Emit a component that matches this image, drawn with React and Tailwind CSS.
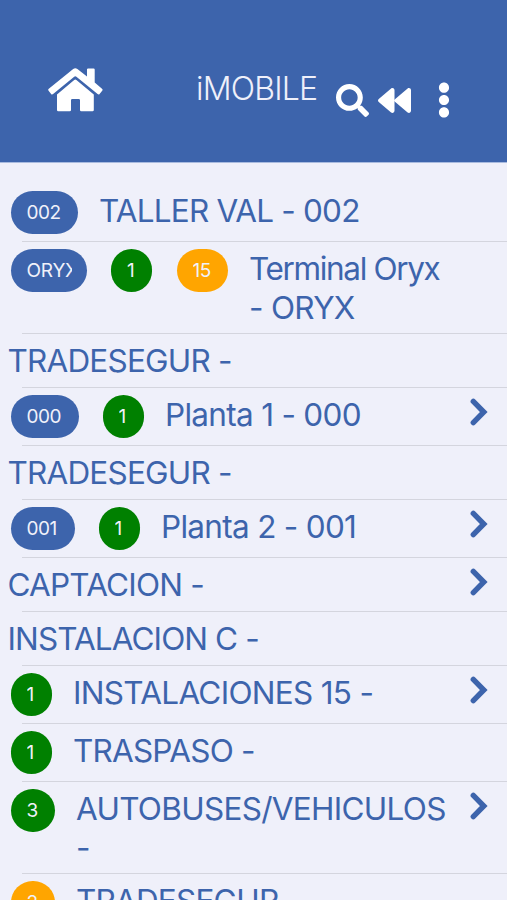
import { FaBackward, FaEllipsisV, FaSearch } from "react-icons/fa";

const BLUE = "bg-[#3d64ac]";
const GREEN = "bg-[#008000]";
const ORANGE = "bg-[#ffa500]";

const rows = [
  {
    badges: [{ text: "002", color: BLUE, size: "w-[67px]" }],
    lines: ["TALLER VAL - 002"],
  },
  {
    badges: [
      { text: "ORYX", color: BLUE, size: "w-[76px]", tracking: "tracking-[-0.2px]" },
      { text: "1", color: GREEN, size: "w-[41px]" },
      { text: "15", color: ORANGE, size: "w-[51px]" },
    ],
    lines: ["Terminal Oryx", "- ORYX"],
    tracking: ["tracking-[-1.35px]", "tracking-[-0.7px]"],
    gap: "gap-[24.5px]",
  },
  { lines: ["TRADESEGUR -"] },
  {
    badges: [
      { text: "000", color: BLUE, size: "w-[68px]" },
      { text: "1", color: GREEN, size: "w-[41px]" },
    ],
    lines: ["Planta 1 - 000"],
    tracking: ["tracking-[-0.7px]"],
    arrow: true,
  },
  { lines: ["TRADESEGUR -"] },
  {
    badges: [
      { text: "001", color: BLUE, size: "w-[64px]" },
      { text: "1", color: GREEN, size: "w-[41px]" },
    ],
    lines: ["Planta 2 - 001"],
    tracking: ["tracking-[-0.7px]"],
    arrow: true,
  },
  { lines: ["CAPTACION -"], arrow: true },
  { lines: ["INSTALACION C -"], tracking: ["tracking-[-0.9px]"] },
  {
    badges: [{ text: "1", color: GREEN, size: "w-[41px]" }],
    lines: ["INSTALACIONES 15 -"],
    tracking: ["tracking-[-0.7px]"],
    arrow: true,
  },
  {
    badges: [{ text: "1", color: GREEN, size: "w-[41px]" }],
    lines: ["TRASPASO -"],
  },
  {
    badges: [{ text: "3", color: GREEN, size: "w-[44px]" }],
    lines: ["AUTOBUSES/VEHICULOS", "-"],
    tracking: ["tracking-[-0.7px]"],
    arrow: true,
  },
  {
    badges: [{ text: "2", color: ORANGE, size: "w-[44px]" }],
    lines: ["TRADESEGUR"],
  },
];

function HomeIcon() {
  return (
    <svg className="ml-12 mt-[65px] h-[49px] w-[55px]" viewBox="0 0 55 49" fill="currentColor">
      {/* roof + chimney */}
      <path d="M25.2 3.9Q27.3 2.4 29.4 3.9L39 11.4V4.6Q39 3.5 40.1 3.5H45.6Q46.7 3.5 46.7 4.6V17.5L54 23.7Q55.1 24.7 54.2 25.8L51.6 28.9Q50.7 29.9 49.6 29L28.4 11.7Q27.3 10.9 26.2 11.7L5.1 29Q4 29.9 3.1 28.9L.6 25.8Q-.3 24.7.8 23.7Z" />
      {/* body with the door cut out */}
      <path d="M26.2 14.9Q27.3 14 28.4 14.9L45.8 29.5V45Q45.8 46.3 44.5 46.3H33.3Q32 46.3 32 45V35.2Q32 34 30.8 34H24.2Q23 34 23 35.2V45Q23 46.3 21.7 46.3H10.3Q9 46.3 9 45V29.5Z" />
    </svg>
  );
}

function Badge({ text, color, size, tracking = "tracking-[-0.5px]" }) {
  return (
    <span
      className={`${color} ${size} ${tracking} h-[43px] shrink-0 rounded-full pl-4 pr-[15px] text-[19px] leading-[43px] text-[#f0f1fa]`}
    >
      <span className="block overflow-hidden">{text}</span>
    </span>
  );
}

function Arrow() {
  return (
    <svg
      className="ml-auto mt-[2.5px] h-7 w-[18px] shrink-0"
      viewBox="0 0 18 28"
      fill="none"
      stroke="#3d64ac"
      strokeWidth="5.4"
      strokeLinecap="round"
      strokeLinejoin="miter"
    >
      <path d="M3.3 3.4 13.8 14 3.3 24.6" />
    </svg>
  );
}

function Row({ badges = [], lines, arrow, tracking = [], gap = "gap-6" }) {
  const hasBadges = badges.length > 0;

  return (
    <li>
      <div
        className={`flex items-start pr-[19px] pt-[7px] ${
          hasBadges ? "min-h-[57px] pl-[10.5px]" : "min-h-[53px] pl-[7.5px]"
        } ${lines.length > 1 ? "pb-[6px]" : ""}`}
      >
        {hasBadges && (
          <div className={`mr-[21.5px] flex ${gap}`}>
            {badges.map((b, i) => (
              <Badge key={i} {...b} />
            ))}
          </div>
        )}
        <div className="whitespace-nowrap pt-px text-[31.5px] leading-[38.5px]">
          {lines.map((line, i) => (
            <div key={line} className={tracking[i] || "tracking-[-0.8px]"}>
              {line}
            </div>
          ))}
        </div>
        {arrow && <Arrow />}
      </div>
      <div className="ml-[22px] h-px bg-[#d4d5de]" />
    </li>
  );
}

export default function App() {
  return (
    <div className="h-[900px] w-[507px] overflow-hidden bg-[#eff0fa] font-['Inter',sans-serif] text-[#3d64ac]">
      <header className="flex h-[163px] items-start border-b border-[#a9bbdf] bg-[#3d64ac] text-white">
        <HomeIcon />
        <h1 className="ml-[93px] mt-[70px] w-[140px] whitespace-nowrap text-[32px] font-light leading-[38px] tracking-[-0.8px] text-[#eff0fa]">
          iMOBILE
        </h1>
        <FaSearch className="mt-[84px] size-[33px]" />
        <FaBackward className="ml-[9px] mt-[84px] size-[33px]" />
        <FaEllipsisV className="ml-[15px] mt-[82px] size-9" />
      </header>

      <ul className="pt-[21px]">
        {rows.map((row, i) => (
          <Row key={i} {...row} />
        ))}
      </ul>
    </div>
  );
}
